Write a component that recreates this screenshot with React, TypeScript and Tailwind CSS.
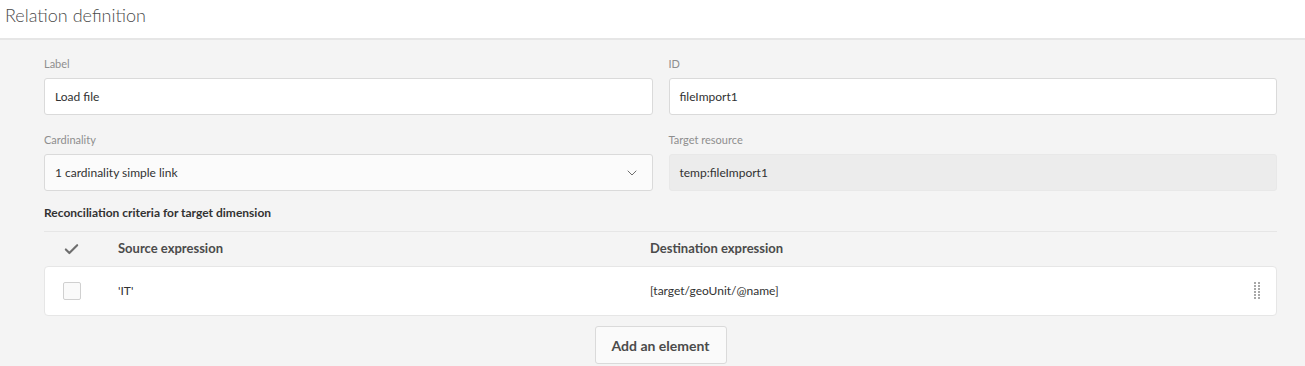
import { Check, ChevronDown } from "lucide-react";

const font = { fontFamily: "Lato, 'Open Sans', sans-serif" };

function Field({ label, value, kind }: { label: string; value: string; kind?: "select" | "disabled" }) {
    return (
        <div className="flex flex-col">
            <div className="text-[11px] text-[#8e8e8e] h-[28px] pt-[6px]">{label}</div>
            <div
                className={`h-[37px] flex items-center justify-between px-[10px] border rounded-[3px] text-[12px] text-[#323232] ${
                    kind === "disabled" ? "bg-[#ececec] border-[#e8e8e8]" : kind === "select" ? "bg-[#fbfbfb] border-[#dadada]" : "bg-white border-[#dadada]"
                }`}
            >
                <span>{value}</span>
                {kind === "select" && <ChevronDown size={16} strokeWidth={1.5} className="text-[#6e6e6e] mr-[2px]" />}
            </div>
        </div>
    );
}

function DragHandle() {
    return (
        <svg width="8" height="18" viewBox="0 0 8 18" className="text-[#a8a8a8]">
            {[0, 1, 2, 3, 4, 5].map((r) =>
                [0, 1].map((c) => <rect key={`${r}-${c}`} x={c * 4 + 1} y={r * 3} width="2" height="2" fill="currentColor" />)
            )}
        </svg>
    );
}

export default function App() {
    return (
        <div className="w-[1305px] h-[366px] bg-[#f4f4f4] overflow-hidden" style={font}>
            {/* Header */}
            <div className="h-[40px] bg-white border-b-2 border-[#e6e6e6] pl-[5px] pt-[2px]">
                <h1 className="text-[18px] font-light text-[#4b4b4b]">Relation definition</h1>
            </div>

            <div className="pl-[44px] pr-[28px] pt-[10px]">
                <div className="grid grid-cols-2 gap-x-[16px] gap-y-[11px]">
                    <Field label="Label" value="Load file" />
                    <Field label="ID" value="fileImport1" />
                    <Field label="Cardinality" value="1 cardinality simple link" kind="select" />
                    <Field label="Target resource" value="temp:fileImport1" kind="disabled" />
                </div>

                <div className="text-[12px] font-bold text-[#323232] mt-[13px] h-[27px]">
                    Reconciliation criteria for target dimension
                </div>

                {/* Table */}
                <div className="border-t border-[#e6e6e6]">
                    <div className="h-[34px] flex items-center text-[13px] font-bold text-[#4b4b4b]">
                        <div className="w-[74px] pl-[19px]">
                            <Check size={17} strokeWidth={3} className="text-[#6e6e6e]" />
                        </div>
                        <div className="w-[532px]">Source expression</div>
                        <div className="flex-1">Destination expression</div>
                    </div>
                    <div className="h-[50px] bg-white border border-[#e6e6e6] rounded-[4px] flex items-center text-[12px] text-[#323232]">
                        <div className="w-[73px] pl-[18px]">
                            <div className="w-[18px] h-[18px] border border-[#d0d0d0] bg-[#fafafa] rounded-[2px]" />
                        </div>
                        <div className="w-[532px]">'IT'</div>
                        <div className="flex-1">[target/geoUnit/@name]</div>
                        <div className="pr-[15px]">
                            <DragHandle />
                        </div>
                    </div>
                </div>

                <div className="flex justify-center pt-[10px]">
                    <button className="h-[38px] w-[132px] bg-[#fafafa] border border-[#dadada] rounded-[3px] text-[14px] font-bold text-[#4b4b4b]">
                        Add an element
                    </button>
                </div>
            </div>
        </div>
    );
}
